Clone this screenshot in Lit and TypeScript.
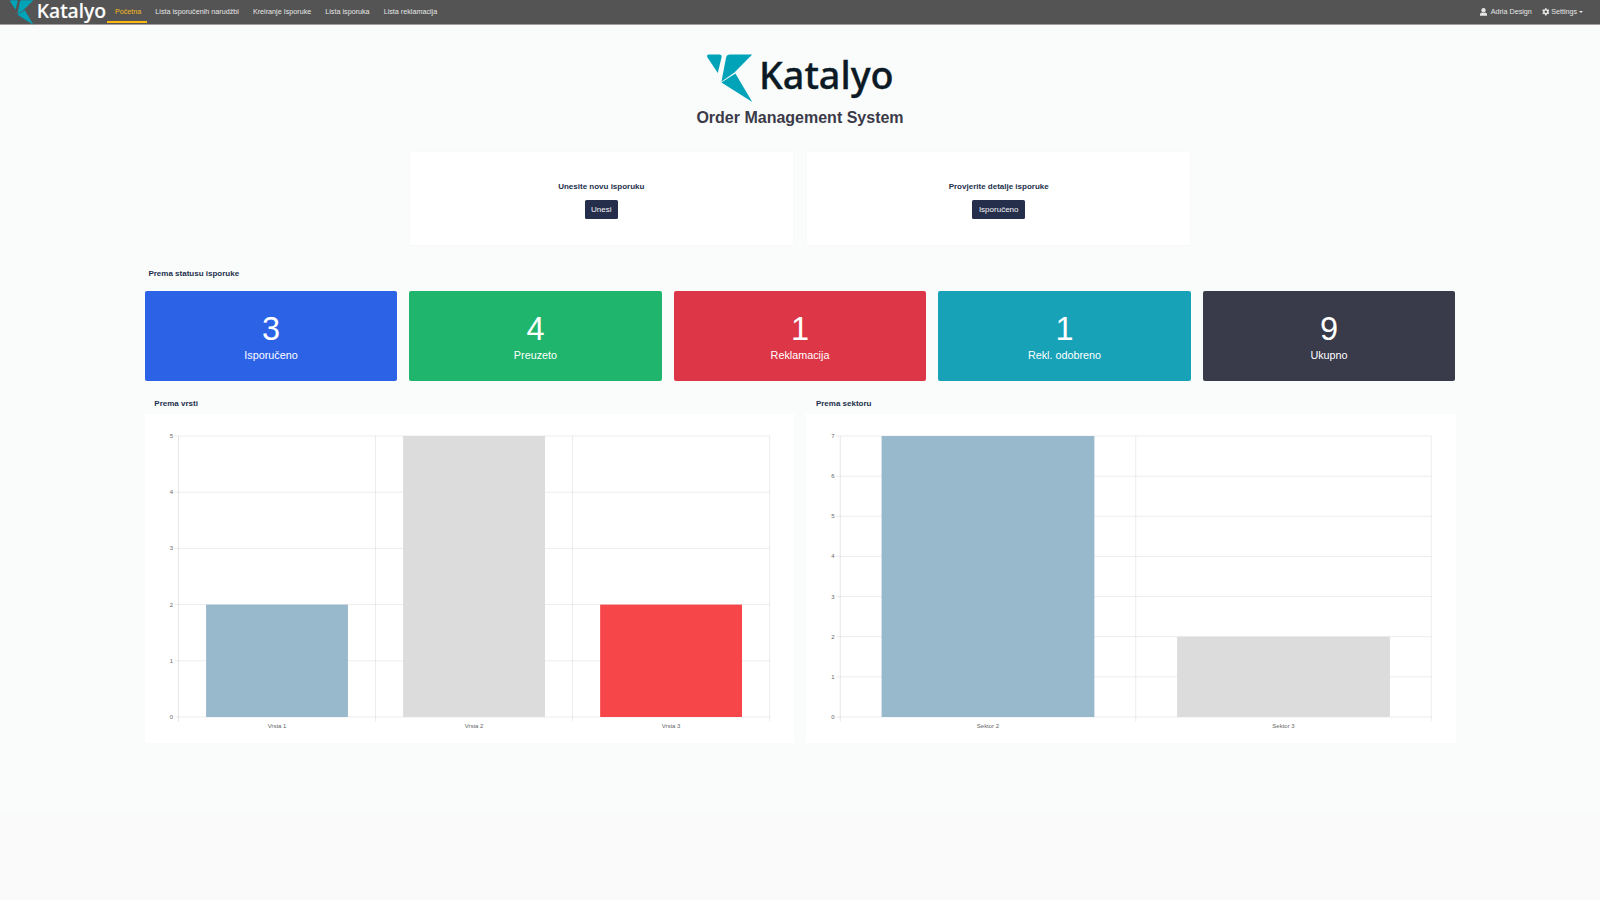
import { LitElement, html, css, svg } from "lit";
import { customElement, property } from "lit/decorators.js";

@customElement("katalyo-logo")
class KatalyoLogo extends LitElement {
  static styles = css`
    :host { display: block; }
    svg { display: block; width: 100%; height: 100%; overflow: visible; }
    .mark { fill: #00a3b8; }
    .word { fill: currentColor; stroke: currentColor; stroke-width: 0.35; font: 500 37.3px "Noto Sans", "Open Sans", sans-serif; }
  `;
  render() {
    return html`<svg viewBox="0 0 187 48">
      <path class="mark" d="M1.8 0.4H12.8Q15 0.6 14.7 2.8L10.8 19L0.5 3.4Q-0.9 0.8 1.8 0.4Z" />
      <path class="mark" d="M22.8 0.4H45.2L27.7 18.2L14.4 27.8L19.1 3.4Q19.7 0.6 22.8 0.4Z" />
      <path class="mark" d="M14.4 28.6L28.4 19.6L45.3 48Z" />
      <text class="word" x="52" y="35.4" textLength="134.6" lengthAdjust="spacingAndGlyphs">Katalyo</text>
    </svg>`;
  }
}

type Bar = { label: string; value: number; color: string };

@customElement("bar-chart")
class BarChart extends LitElement {
  @property({ attribute: false }) bars: Bar[] = [];
  @property({ type: Number }) max = 5;
  @property({ type: Number }) left = 34.2;
  static styles = css`
    :host { display: block; width: 649.4px; height: 329px; }
    svg { display: block; }
    .grid { stroke: #000; stroke-opacity: 0.08; stroke-width: 1; }
    .axis { stroke: #000; stroke-opacity: 0.1; stroke-width: 1; }
    .tick { font: 6px "Liberation Sans", Arial, sans-serif; fill: #666; }
    .end { text-anchor: end; }
    .mid { text-anchor: middle; }
  `;
  render() {
    const left = this.left, right = left + 591.1, top = 22, bottom = 303;
    const slot = (right - left) / this.bars.length;
    const rows = Array.from({ length: this.max + 1 }, (_, i) => i);
    const y = (v: number) => bottom - ((bottom - top) * v) / this.max;
    return html`<svg width="649.4" height="329" viewBox="0 0 649.4 329">
      ${rows.map((v) => svg`
        <line class="grid" x1=${left - 4} x2=${right} y1=${y(v)} y2=${y(v)} />
        <text class="tick end" x=${left - 5.5} y=${y(v) + 2}>${v}</text>`)}
      ${[...this.bars, null].map((_, i) => svg`
        <line class=${i ? "grid" : "axis"} x1=${left + slot * i} x2=${left + slot * i} y1=${top} y2=${bottom + 4.5} />`)}
      ${this.bars.map((b, i) => svg`
        <rect fill=${b.color} x=${left + slot * (i + 0.14)} width=${slot * 0.72} y=${y(b.value)} height=${bottom - y(b.value)} />
        <text class="tick mid" x=${left + slot * (i + 0.5)} y="314.2">${b.label}</text>`)}
    </svg>`;
  }
}

@customElement("app-root")
class AppRoot extends LitElement {
  static styles = css`
    :host { display: block; height: 900px; overflow: hidden; background: #fafafa; font-family: "Liberation Sans", Arial, sans-serif; color: #23304d; }
    * { box-sizing: border-box; }
    nav { display: flex; height: 24.5px; background: #545454; border-bottom: 1px solid #a39f9f; color: #e6e6e6; font-size: 7.2px; line-height: 24px; padding-left: 9.6px; white-space: nowrap; }
    .brand { width: 96.3px; height: 24.7px; margin: -0.5px 1.1px 0 0; color: #fff; flex: none; }
    .link { padding: 0 7.02px; height: 23px; }
    .active { padding: 0 5.9px 0 7.9px; color: #f5b921; border-bottom: 2.4px solid #fdb80f; margin-right: 1.2px; }
    .account { margin-left: auto; display: flex; align-items: center; height: 24px; padding-right: 17.4px; }
    .user { width: 7px; height: 8px; margin-right: 3.5px; }
    .gear { width: 7.6px; height: 7.6px; margin: 0 2px 0 9.7px; }
    .caret { border: 2.1px solid transparent; border-top-color: currentColor; border-bottom: 0; margin: -1px 0 0 1.5px; }
    main { height: 788.5px; background: #fafcfb; display: flex; flex-direction: column; align-items: center; padding-top: 29.5px; }
    .logo { width: 187px; height: 48px; color: #0b1a24; }
    h1 { margin: 6px 0 0; font-size: 16px; line-height: 19px; color: #3a3a49; }
    .actions { display: flex; gap: 14px; margin-top: 24.9px; }
    .action { width: 383.4px; height: 93px; background: #fff; box-shadow: 0 0 1px #0000000d; display: flex; flex-direction: column; align-items: center; padding-top: 30.3px; font-size: 8px; font-weight: 700; line-height: 9px; }
    button { margin-top: 8.7px; height: 19px; padding: 0 6.5px; border: 0; border-radius: 1.6px; background: #252e4b; color: #f4f4f6; font: 8px "Liberation Sans", Arial, sans-serif; line-height: 19px; }
    .content { width: 1311px; }
    h2 { margin: 0; font-size: 8px; line-height: 10px; }
    .status { margin: 24.2px 0 11.9px 3.9px; }
    .cards { display: flex; gap: 11.6px; }
    .card { flex: 1; height: 89.7px; border-radius: 2px; color: #fff; text-align: center; padding-top: 18px; }
    .blue { background: #2c62e6; } .green { background: #1fb56c; } .red { background: #dd3646; } .teal { background: #18a2b8; } .dark { background: #393a4a; }
    .number { font-size: 32.5px; line-height: 40px; }
    .name { font-size: 10.8px; line-height: 13px; }
    .charts { display: flex; justify-content: space-between; margin-top: 18.3px; }
    .charts h2 { margin: 0 0 4.9px 9.8px; }
    bar-chart { background: #fff; }
  `;
  render() {
    const cards = [["3", "Isporučeno", "blue"], ["4", "Preuzeto", "green"], ["1", "Reklamacija", "red"], ["1", "Rekl. odobreno", "teal"], ["9", "Ukupno", "dark"]];
    const links = ["Lista isporučenih narudžbi", "Kreiranje Isporuke", "Lista isporuka", "Lista reklamacija"];
    return html`
      <nav>
        <katalyo-logo class="brand"></katalyo-logo>
        <span class="link active">Početna</span>
        ${links.map((l) => html`<span class="link">${l}</span>`)}
        <div class="account">
          <svg class="user" viewBox="0 0 14 16" fill="currentColor"><circle cx="7" cy="4.5" r="4.3" /><path d="M0 15.5v-2.5q0-4 4-4.2q3 1.5 6 0q4 .2 4 4.2v2.5z" /></svg>
          <span>Adria Design</span>
          <svg class="gear" viewBox="0 0 16 16"><circle cx="8" cy="8" r="4.2" fill="none" stroke="currentColor" stroke-width="3.4" /><path d="M8 .3v3M8 12.7v3M1.3 4.15l2.6 1.5M12.1 10.35l2.6 1.5M1.3 11.85l2.6-1.5M12.1 5.65l2.6-1.5" stroke="currentColor" stroke-width="3.4" /></svg>
          <span>Settings</span><i class="caret"></i>
        </div>
      </nav>
      <main>
        <katalyo-logo class="logo"></katalyo-logo>
        <h1>Order Management System</h1>
        <section class="actions">
          <div class="action">Unesite novu isporuku<button>Unesi</button></div>
          <div class="action">Provjerite detalje isporuke<button>Isporučeno</button></div>
        </section>
        <div class="content">
          <h2 class="status">Prema statusu isporuke</h2>
          <section class="cards">
            ${cards.map(([n, name, tone]) => html`<div class="card ${tone}"><div class="number">${n}</div><div class="name">${name}</div></div>`)}
          </section>
          <section class="charts">
            <div><h2>Prema vrsti</h2><bar-chart .max=${5} .left=${33.5} .bars=${[{ label: "Vrsta 1", value: 2, color: "#98b9cc" }, { label: "Vrsta 2", value: 5, color: "#dcdcdc" }, { label: "Vrsta 3", value: 2, color: "#f7464a" }]}></bar-chart></div>
            <div><h2>Prema sektoru</h2><bar-chart .max=${7} .bars=${[{ label: "Sektor 2", value: 7, color: "#98b9cc" }, { label: "Sektor 3", value: 2, color: "#dcdcdc" }]}></bar-chart></div>
          </section>
        </div>
      </main>`;
  }
}
